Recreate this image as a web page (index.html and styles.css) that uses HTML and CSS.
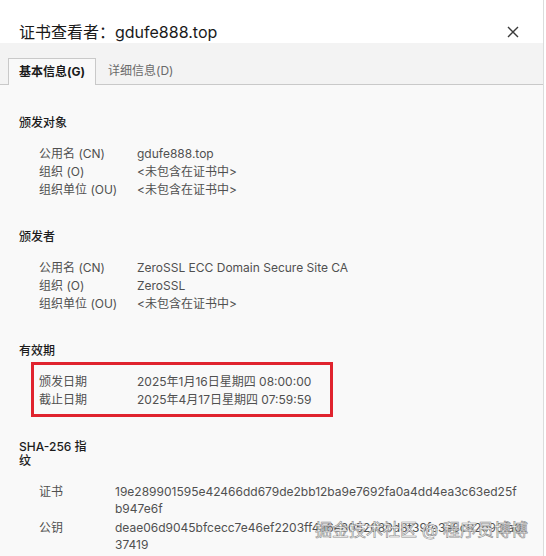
FILE: index.html
```html
<!DOCTYPE html>
<html lang="zh-CN">
<head>
<meta charset="utf-8">
<title>证书查看者</title>
<link rel="stylesheet" href="styles.css">
</head>
<body>
<div class="dialog">
  <header class="dlg-head">
    <h1 class="dlg-title">证书查看者：gdufe888.top</h1>
    <button class="close" aria-label="关闭">
      <svg width="12" height="12" viewBox="0 0 12 12"><path d="M1 1L11 11M11 1L1 11" stroke="#3a3a3a" stroke-width="1.4" fill="none"/></svg>
    </button>
  </header>
  <nav class="tabs">
    <div class="tab active">基本信息(G)</div>
    <div class="tab">详细信息(D)</div>
  </nav>
  <main class="content">
    <section class="sec">
      <h2 class="sec-title">颁发对象</h2>
      <dl class="rows">
        <dt>公用名 (CN)</dt><dd>gdufe888.top</dd>
        <dt>组织 (O)</dt><dd>&lt;未包含在证书中&gt;</dd>
        <dt>组织单位 (OU)</dt><dd>&lt;未包含在证书中&gt;</dd>
      </dl>
    </section>
    <section class="sec">
      <h2 class="sec-title">颁发者</h2>
      <dl class="rows">
        <dt>公用名 (CN)</dt><dd>ZeroSSL ECC Domain Secure Site CA</dd>
        <dt>组织 (O)</dt><dd>ZeroSSL</dd>
        <dt>组织单位 (OU)</dt><dd>&lt;未包含在证书中&gt;</dd>
      </dl>
    </section>
    <section class="sec">
      <h2 class="sec-title">有效期</h2>
      <dl class="rows highlighted">
        <dt>颁发日期</dt><dd>2025年1月16日星期四 08:00:00</dd>
        <dt>截止日期</dt><dd>2025年4月17日星期四 07:59:59</dd>
        <span class="mark"></span>
      </dl>
    </section>
    <section class="sec">
      <h2 class="sec-title narrow">SHA-256 指纹</h2>
      <dl class="rows fp">
        <dt>证书</dt><dd><span class="hex-line">19e289901595e42466dd679de2bb12ba9e7692fa0a4dd4ea3c63ed25f</span><span class="hex-line">b947e6f</span></dd>
        <dt>公钥</dt><dd><span class="hex-line">deae06d9045bfcecc7e46ef2203ff4a6e8052080d8f39fe3e8c92e96fa0</span><span class="hex-line">37419</span></dd>
      </dl>
    </section>
  </main>
  <div class="watermark">掘金技术社区 @ 程序员博博</div>
</div>
</body>
</html>
```

FILE: styles.css
```css
* { box-sizing: border-box; }
html, body {
  margin: 0;
  padding: 0;
  background: #ffffff;
  height: 556px;
  overflow: hidden;
}
body {
  font-family: "Inter", "Noto Sans CJK SC", sans-serif;
  color: #222;
}
.dialog {
  position: relative;
  width: 544px;
  height: 556px;
  overflow: hidden;
  border-right: 1px solid #dcdcdc;
  background: #f9f9f9;
}
.dlg-head {
  display: flex;
  align-items: flex-start;
  justify-content: space-between;
  height: 43px;
  padding: 22px 24px 0 19px;
  background: #fff;
}
.dlg-title {
  margin: 0;
  font-size: 16px;
  line-height: 20px;
  font-weight: 400;
  color: #1a1a1a;
}
.close {
  margin: 4px 0 0 0;
  padding: 0;
  border: 0;
  background: none;
  width: 12px;
  height: 12px;
  display: block;
}
.close svg { display: block; }
.tabs {
  display: flex;
  height: 42px;
  padding: 15px 0 0 8px;
  background: #f3f3f3;
  border-bottom: 1px solid #c9c9c9;
}
.tab {
  font-size: 12px;
  line-height: 26px;
  height: 27px;
  padding: 0 11px 0 12px;
  color: #6a6a6a;
}
.tab.active {
  padding: 0 10px 0 10px;
  font-weight: 700;
  color: #1a1a1a;
  background: #f9f9f9;
  border: 1px solid #c9c9c9;
  border-bottom: 0;
}
.content {
  padding: 31px 0 0 19px;
}
.sec { margin-bottom: 31px; }
.sec-title {
  margin: 0 0 15px 0;
  font-size: 12px;
  line-height: 14px;
  font-weight: 500;
  color: #1c1c1c;
}
.sec-title.narrow { width: 70px; }
.rows {
  position: relative;
  display: grid;
  grid-template-columns: 98px auto;
  justify-content: start;
  margin: 0 0 0 20px;
  font-size: 12px;
  line-height: 18px;
  color: #505050;
}
.rows dt, .rows dd { margin: 0; }
.rows.fp {
  grid-template-columns: 76px auto;
  row-gap: 2px;
  line-height: 17px;
}
.hex-line { display: block; }
.mark {
  position: absolute;
  left: -8px;
  top: -11px;
  width: 302px;
  height: 55px;
  border: 3px solid #e0232e;
}
.watermark {
  position: absolute;
  right: 15px;
  bottom: 16px;
  font-size: 17px;
  line-height: 20px;
  color: #fff;
  -webkit-text-stroke: 0.6px #8c8c8c;
}
```
